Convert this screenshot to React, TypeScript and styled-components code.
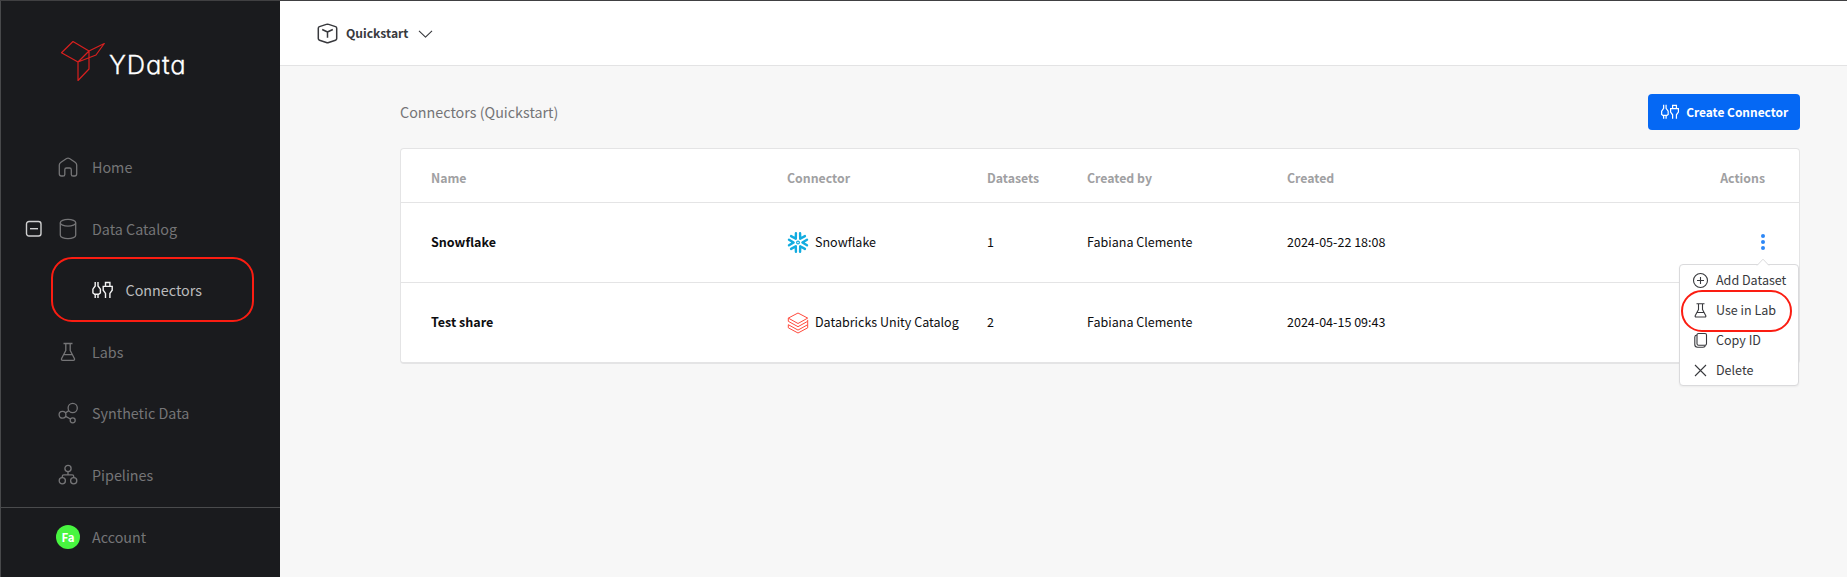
import React from "react";
import styled, { createGlobalStyle, css } from "styled-components";

const Global = createGlobalStyle`
  * { box-sizing: border-box; }
  body {
    margin: 0;
    background: #f7f7f7;
    font-family: "Noto Sans CJK SC", "Open Sans", sans-serif;
    font-size: 12.54px;
    line-height: 20px;
    color: #0d0d0f;
  }
`;

const Page = styled.div`
  display: flex;
  height: 577px;
  overflow: hidden;
  border-top: 1px solid #404042;
`;

const Sidebar = styled.aside`
  width: 280px;
  flex: none;
  display: flex;
  flex-direction: column;
  background: #1a1b1e;
  border-left: 1px solid #48494b;
`;

const Brand = styled.div`
  display: flex;
  align-items: flex-start;
  height: 135.5px;
  padding: 39px 0 0 58px;
`;

const BrandName = styled.span`
  margin: 9px 0 0 4px;
  font-family: Inter, Lato, sans-serif;
  font-feature-settings: "cv11", "ss03";
  font-size: 25.5px;
  font-weight: 300;
  line-height: 32px;
  letter-spacing: 0.8px;
  color: #fff;
  -webkit-text-stroke: 0.3px #fff;
`;

const Nav = styled.nav`
  display: flex;
  flex-direction: column;
  flex: 1;
`;

const NavItem = styled.div<{ $active?: boolean; $sub?: boolean }>`
  position: relative;
  display: flex;
  align-items: center;
  height: 61.5px;
  padding-left: ${(p) => (p.$sub ? 90 : 20)}px;
  font-size: 14.33px;
  color: ${(p) => (p.$active ? "#bcbcbd" : "#757577")};
`;

const Toggle = styled.span`
  display: flex;
  width: 36px;
  padding-left: 4px;
  color: #d0d0d1;
`;

const NavIcon = styled.span<{ $sub?: boolean }>`
  display: flex;
  justify-content: center;
  width: 22px;
  margin-right: ${(p) => (p.$sub ? 12.5 : 13)}px;
  color: ${(p) => (p.$sub ? "#f4f4f4" : "inherit")};
`;

const ring = css`
  position: absolute;
  border: 2px solid #fb1d12;
  pointer-events: none;
`;

const NavRing = styled.span`
  ${ring}
  left: 50px;
  top: -2.5px;
  width: 203px;
  height: 65px;
  border-radius: 21px;
`;

const Account = styled.div`
  display: flex;
  align-items: center;
  height: 70px;
  padding: 0 0 11px 55px;
  border-top: 1px solid #4a4b4d;
  font-size: 14.33px;
  color: #757577;
`;

const Avatar = styled.span`
  width: 24px;
  height: 24px;
  margin-right: 12px;
  border-radius: 50%;
  background: #48f540;
  color: #fff;
  font-size: 11.5px;
  font-weight: 700;
  line-height: 24px;
  text-align: center;
`;

const Main = styled.main`
  flex: 1;
  display: flex;
  flex-direction: column;
`;

const TopBar = styled.header`
  display: flex;
  align-items: center;
  height: 65px;
  padding-left: 37px;
  background: #fff;
  border-bottom: 1px solid #e3e3e4;
  color: #38393d;
`;

const Project = styled.span`
  margin: 0 9.5px 0 8px;
  font-weight: 700;
  font-size: 12.1px;
`;

const Content = styled.section`
  padding: 28px 47px 0 120px;
`;

const Heading = styled.div`
  display: flex;
  align-items: center;
  justify-content: space-between;
  height: 36px;
`;

const Title = styled.h1`
  margin: 0;
  font-size: 14.33px;
  font-weight: 400;
  color: #747476;
`;

const CreateButton = styled.button`
  display: flex;
  align-items: center;
  gap: 7px;
  width: 152px;
  height: 36px;
  padding: 0 0 0 12px;
  border: 0;
  border-radius: 4px;
  background: #0568f4;
  color: #fff;
  font: 700 11.95px/20px "Noto Sans CJK SC", sans-serif;
  white-space: nowrap;
`;

const Table = styled.div`
  margin-top: 18px;
  border: 1px solid #e4e4e5;
  border-bottom-width: 2px;
  border-radius: 4px;
  background: #fff;
`;

const Row = styled.div<{ $head?: boolean }>`
  position: relative;
  display: grid;
  grid-template-columns: 356px 200px 100px 200px 1fr 73px;
  align-items: center;
  height: ${(p) => (p.$head ? 54 : 80)}px;
  padding: ${(p) => (p.$head ? "4px 0 0 30px" : "0 0 2px 30px")};
  border-bottom: 1px solid #e4e4e5;
  ${(p) => p.$head && "color: #a0a0a2; font-weight: 700; font-size: 12.3px;"}
  &:last-child {
    border-bottom: 0;
    height: 79px;
    padding-bottom: 1px;
  }
`;

const Name = styled.span`
  font-weight: 700;
`;

const Connector = styled.span`
  display: flex;
  align-items: center;
  gap: 6px;
  white-space: nowrap;
`;

const ConnectorIcon = styled.span`
  display: flex;
  padding-top: 2px;
`;

const ActionHead = styled.span`
  justify-self: end;
  padding-right: 34px;
`;

const Actions = styled.span`
  display: flex;
  padding-left: 34px;
`;

const Menu = styled.div`
  position: absolute;
  z-index: 2;
  right: 0;
  top: 61px;
  width: 120px;
  height: 122px;
  border: 1px solid #dadadc;
  border-radius: 4px;
  background: #fff;
  color: #38393d;
  box-shadow: 0 1px 2px rgba(0, 0, 0, 0.05);
`;

const MenuTip = styled.svg`
  position: absolute;
  right: 28px;
  top: -7px;
`;

const MenuItem = styled.div`
  display: flex;
  align-items: center;
  gap: 7px;
  height: 30px;
  padding-left: 12px;
  white-space: nowrap;
`;

const MenuRing = styled.span`
  ${ring}
  left: 1px;
  top: 25px;
  width: 111px;
  height: 42px;
  border-radius: 21px;
`;

type IconProps = { w: number; h: number; s?: number; children: React.ReactNode };
const Icon = ({ w, h, s = 1.3, children }: IconProps) => (
  <svg width={w} height={h} viewBox={`0 0 ${w} ${h}`} fill="none" stroke="currentColor" strokeWidth={s} strokeLinejoin="round">
    {children}
  </svg>
);

const PlugIcon = ({ scale = 1 }: { scale?: number }) => (
  <svg width={22 * scale} height={18 * scale} viewBox="0 0 22 18" fill="none" stroke="currentColor" strokeWidth={1.4}>
    <path d="M4.2 1v4L1.9 8.2V12l2.3 1.7V17M7 1v4l2.4 3.2V12L7 13.7V17M3 13.2h5.2M14.5 5.2V1.5h4.4v3.7M14.5 17v-4.6l-2.3-3.2V5.4h9v3.8l-2.3 3.2V17" />
  </svg>
);

const SnowflakeIcon = () => (
  <svg width="22" height="21" viewBox="-11 -10.5 22 21" fill="none" stroke="#12ace0" strokeWidth="2.4" strokeLinecap="round" strokeLinejoin="round">
    {[0, 60, 120, 180, 240, 300].map((a) => (
      <path key={a} transform={`rotate(${a})`} d="M9 -2.8 4.4 0 9 2.8" />
    ))}
    <circle r="1.4" strokeWidth="1.2" />
  </svg>
);

const DatabricksIcon = () => (
  <Icon w={22} h={22} s={1}>
    <g stroke="#ff4a3d" transform="translate(.5 0)">
      <path d="M.8 9.3V6.1L10.5 1l9.7 5.1-9.7 5.4L.8 6.1" />
      <path d="M.8 9.3l9.7 5.4 9.7-5.4v3.4l-9.7 5.4-9.7-5.4v3.1l9.7 5.2 9.7-5.2v-3.1M20.2 9.3V7.9" />
    </g>
  </Icon>
);

const rows = [
  { name: "Snowflake", connector: "Snowflake", icon: <SnowflakeIcon />, datasets: 1, date: "2024-05-22 18:08", open: true },
  { name: "Test share", connector: "Databricks Unity Catalog", icon: <DatabricksIcon />, datasets: 2, date: "2024-04-15 09:43", open: false },
];

export default function App() {
  return (
    <Page>
      <Global />
      <Sidebar>
        <Brand>
          <svg width="46" height="42" viewBox="0 0 46 42" fill="none" stroke="#d8201f" strokeWidth="1.2" strokeLinejoin="round">
            <path d="M2.5 12.8 14 1.5l16 9.5-11 11zM19 22v18.5L30 29V11M19 22l18-7L45.3 3.5 30 11" />
          </svg>
          <BrandName>YData</BrandName>
        </Brand>
        <Nav>
          <NavItem>
            <Toggle />
            <NavIcon>
              <Icon w={20} h={20}>
                <path d="M8.6 1.5 3 5.2Q1.3 6.3 1.3 8v8.7Q1.3 19 3.5 19H5q1.8 0 1.8-1.6v-4.6Q6.8 11 8.5 11h3q1.8 0 1.8 1.8v4.6q0 1.6 1.8 1.6h1.5q2.1 0 2.1-2.3V8q0-1.7-1.6-2.8l-5.6-3.7Q10 .6 8.6 1.5z" />
              </Icon>
            </NavIcon>
            Home
          </NavItem>
          <NavItem>
            <Toggle>
              <Icon w={18} h={18} s={1.4}>
                <rect x="1.5" y="1.5" width="14.5" height="14.5" rx="2.5" />
                <path d="M5 8.7h8" />
              </Icon>
            </Toggle>
            <NavIcon>
              <Icon w={18} h={22}>
                <ellipse cx="9" cy="4.7" rx="7.7" ry="3.4" />
                <path d="M1.3 4.7v12.5c0 1.9 3.4 3.4 7.7 3.4s7.7-1.5 7.7-3.4V4.7" />
              </Icon>
            </NavIcon>
            Data Catalog
          </NavItem>
          <NavItem $active $sub>
            <NavIcon $sub>
              <PlugIcon />
            </NavIcon>
            Connectors
            <NavRing />
          </NavItem>
          <NavItem>
            <Toggle />
            <NavIcon>
              <Icon w={16} h={20}>
                <path d="M3.5 1.5h9M5.8 1.5v7l-4.2 8q-.6 1.9 1.2 1.9h10.4q1.8 0 1.2-1.9l-4.2-8v-7M3.8 12.7h8.4" />
              </Icon>
            </NavIcon>
            Labs
          </NavItem>
          <NavItem>
            <Toggle />
            <NavIcon>
              <Icon w={21} h={22}>
                <circle cx="14.7" cy="6" r="4.6" />
                <circle cx="4.5" cy="12.8" r="3.4" />
                <circle cx="14.7" cy="18.3" r="2.5" />
                <path d="m7.3 11 3.5-2.4M7.6 14.4l4.9 2.6" />
              </Icon>
            </NavIcon>
            Synthetic Data
          </NavItem>
          <NavItem>
            <Toggle />
            <NavIcon>
              <Icon w={20} h={22}>
                <circle cx="10" cy="4.5" r="3.1" />
                <circle cx="4.3" cy="16.8" r="3.1" />
                <circle cx="15.7" cy="16.8" r="3.1" />
                <path d="M10 7.6v3.2M4.3 13.7v-1.4q0-1.5 1.5-1.5h8.4q1.5 0 1.5 1.5v1.4" />
              </Icon>
            </NavIcon>
            Pipelines
          </NavItem>
        </Nav>
        <Account>
          <Avatar>Fa</Avatar>
          Account
        </Account>
      </Sidebar>
      <Main>
        <TopBar>
          <Icon w={21} h={21} s={1.5}>
            <path d="m9.3 1.4-6.8 2.2q-1.2.4-1.2 1.6v10.4q0 1.2 1.2 1.6l6.8 2.3q1.2.4 2.4 0l6.8-2.3q1.2-.4 1.2-1.6V5.2q0-1.2-1.2-1.6l-6.8-2.2q-1.2-.4-2.4 0zM5.2 6.5l5.3 2.5 5.3-2.5M10.5 9v5.7" />
          </Icon>
          <Project>Quickstart</Project>
          <Icon w={15} h={9} s={1.1}>
            <path d="m1 1.8 6.5 6.4L14 1.8" />
          </Icon>
        </TopBar>
        <Content>
          <Heading>
            <Title>Connectors (Quickstart)</Title>
            <CreateButton>
              <PlugIcon scale={0.87} />
              Create Connector
            </CreateButton>
          </Heading>
          <Table>
            <Row $head>
              <span>Name</span>
              <span>Connector</span>
              <span>Datasets</span>
              <span>Created by</span>
              <span>Created</span>
              <ActionHead>Actions</ActionHead>
            </Row>
            {rows.map((r) => (
              <Row key={r.name}>
                <Name>{r.name}</Name>
                <Connector>
                  <ConnectorIcon>{r.icon}</ConnectorIcon>
                  {r.connector}
                </Connector>
                <span>{r.datasets}</span>
                <span>Fabiana Clemente</span>
                <span>{r.date}</span>
                <Actions>
                  {r.open && (
                    <svg width="6" height="18" viewBox="0 0 6 18" fill="#2d87f6">
                      <circle cx="3" cy="3" r="2" />
                      <circle cx="3" cy="9" r="2" />
                      <circle cx="3" cy="15" r="2" />
                    </svg>
                  )}
                </Actions>
                {r.open && (
                  <Menu>
                    <MenuTip width="14" height="8" viewBox="0 0 14 8" fill="#fff" stroke="#dadadc">
                      <path d="M1 7.5 7 1.2l6 6.3" />
                    </MenuTip>
                    <MenuItem>
                      <Icon w={17} h={17} s={1.1}>
                        <circle cx="8.5" cy="8.5" r="7" />
                        <path d="M8.5 5v7M5 8.5h7" />
                      </Icon>
                      Add Dataset
                    </MenuItem>
                    <MenuItem>
                      <Icon w={17} h={17} s={1.1}>
                        <path d="M4.5 1.7h8M6.5 1.7v5.8l-3.3 6.2q-.4 1.3.9 1.3h8.8q1.3 0 .9-1.3L10.5 7.5V1.7M5.3 10.5h6.4" />
                      </Icon>
                      Use in Lab
                    </MenuItem>
                    <MenuItem>
                      <Icon w={17} h={17} s={1.1}>
                        <rect x="5" y="1.5" width="9.5" height="11.8" rx="1.5" />
                        <path d="M5 3q-2.2.2-2.2 2v7.5q0 2.7 2.7 2.7h5.5q2 0 2.5-1.9" />
                      </Icon>
                      Copy ID
                    </MenuItem>
                    <MenuItem>
                      <Icon w={17} h={17} s={1.1}>
                        <path d="m3 3 11 11M14 3 3 14" />
                      </Icon>
                      Delete
                    </MenuItem>
                    <MenuRing />
                  </Menu>
                )}
              </Row>
            ))}
          </Table>
        </Content>
      </Main>
    </Page>
  );
}
